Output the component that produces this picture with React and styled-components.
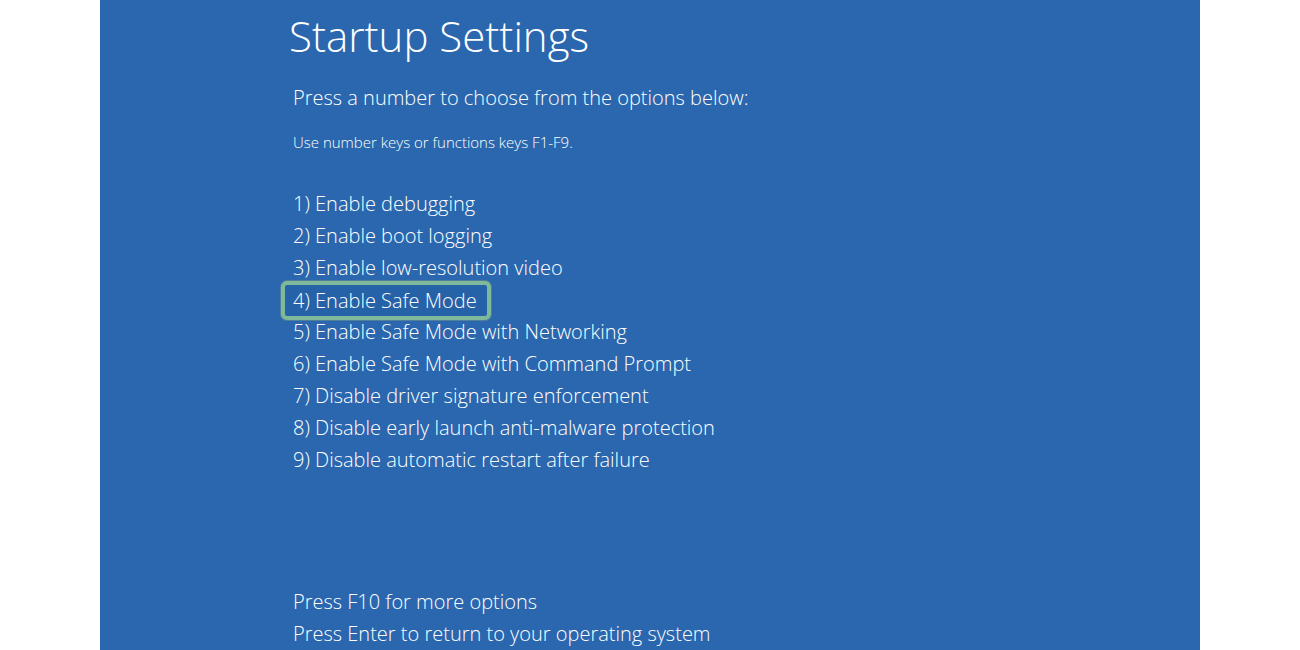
import styled, { createGlobalStyle } from "styled-components";

const GlobalStyle = createGlobalStyle`
    html, body {
        margin: 0;
        padding: 0;
        background: #FFF;
    }
`

const Page = styled.div`
    width: 1300px;
    height: 650px;
    display: flex;
    justify-content: center;
    overflow: hidden;
`

const Screen = styled.main`
    width: 1100px;
    height: 650px;
    background-color: #2a67ae;
    color: #FFF;
    font-family: "Open Sans", "Noto Sans", sans-serif;
    font-weight: 300;
    padding-left: 190px;
    box-sizing: border-box;
    display: flex;
    flex-direction: column;
`

const Title = styled.h1`
    margin: 11px 0 0 -1px;
    font-size: 42px;
    font-weight: 300;
    line-height: 50px;
`

const Lead = styled.p`
    margin: 24px 0 0 3px;
    font-size: 20px;
    line-height: 26px;
`

const Hint = styled.p`
    margin: 21px 0 0 3px;
    font-size: 15px;
    line-height: 20px;
`

const Options = styled.ol`
    list-style: none;
    margin: 35px 0 0 0;
    padding: 0 0 0 3px;
`

const Row = styled.li`
    display: flex;
    height: 32px;
    align-items: center;
`

const Option = styled.span`
    display: inline-flex;
    align-items: center;
    font-size: 20px;
    box-sizing: border-box;
    height: 32px;

    &[data-selected="true"] {
        height: 39px;
        margin-left: -12px;
        padding: 0 10px 0 8px;
        border: 4px solid #7fb99b;
        border-radius: 6px;
        background: #2562a8;
        box-shadow: 0 0 0 1px #4f7f9a;
        position: relative;
        top: 1px;
    }
`

const Footer = styled.div`
    margin-top: auto;
    margin-bottom: 0;
    padding-left: 3px;
`

const FooterLine = styled.div`
    font-size: 20px;
    line-height: 32px;
`

const options = [
    "1) Enable debugging",
    "2) Enable boot logging",
    "3) Enable low-resolution video",
    "4) Enable Safe Mode",
    "5) Enable Safe Mode with Networking",
    "6) Enable Safe Mode with Command Prompt",
    "7) Disable driver signature enforcement",
    "8) Disable early launch anti-malware protection",
    "9) Disable automatic restart after failure",
]

const App = () => {
    return (
        <Page>
            <GlobalStyle />
            <Screen>
                <Title>Startup Settings</Title>
                <Lead>Press a number to choose from the options below:</Lead>
                <Hint>Use number keys or functions keys F1-F9.</Hint>
                <Options>
                    {options.map((text, id) => (
                        <Row key={id}>
                            <Option data-selected={id === 3}>{text}</Option>
                        </Row>
                    ))}
                </Options>
                <Footer>
                    <FooterLine>Press F10 for more options</FooterLine>
                    <FooterLine>Press Enter to return to your operating system</FooterLine>
                </Footer>
            </Screen>
        </Page>
    );
}

export default App;
